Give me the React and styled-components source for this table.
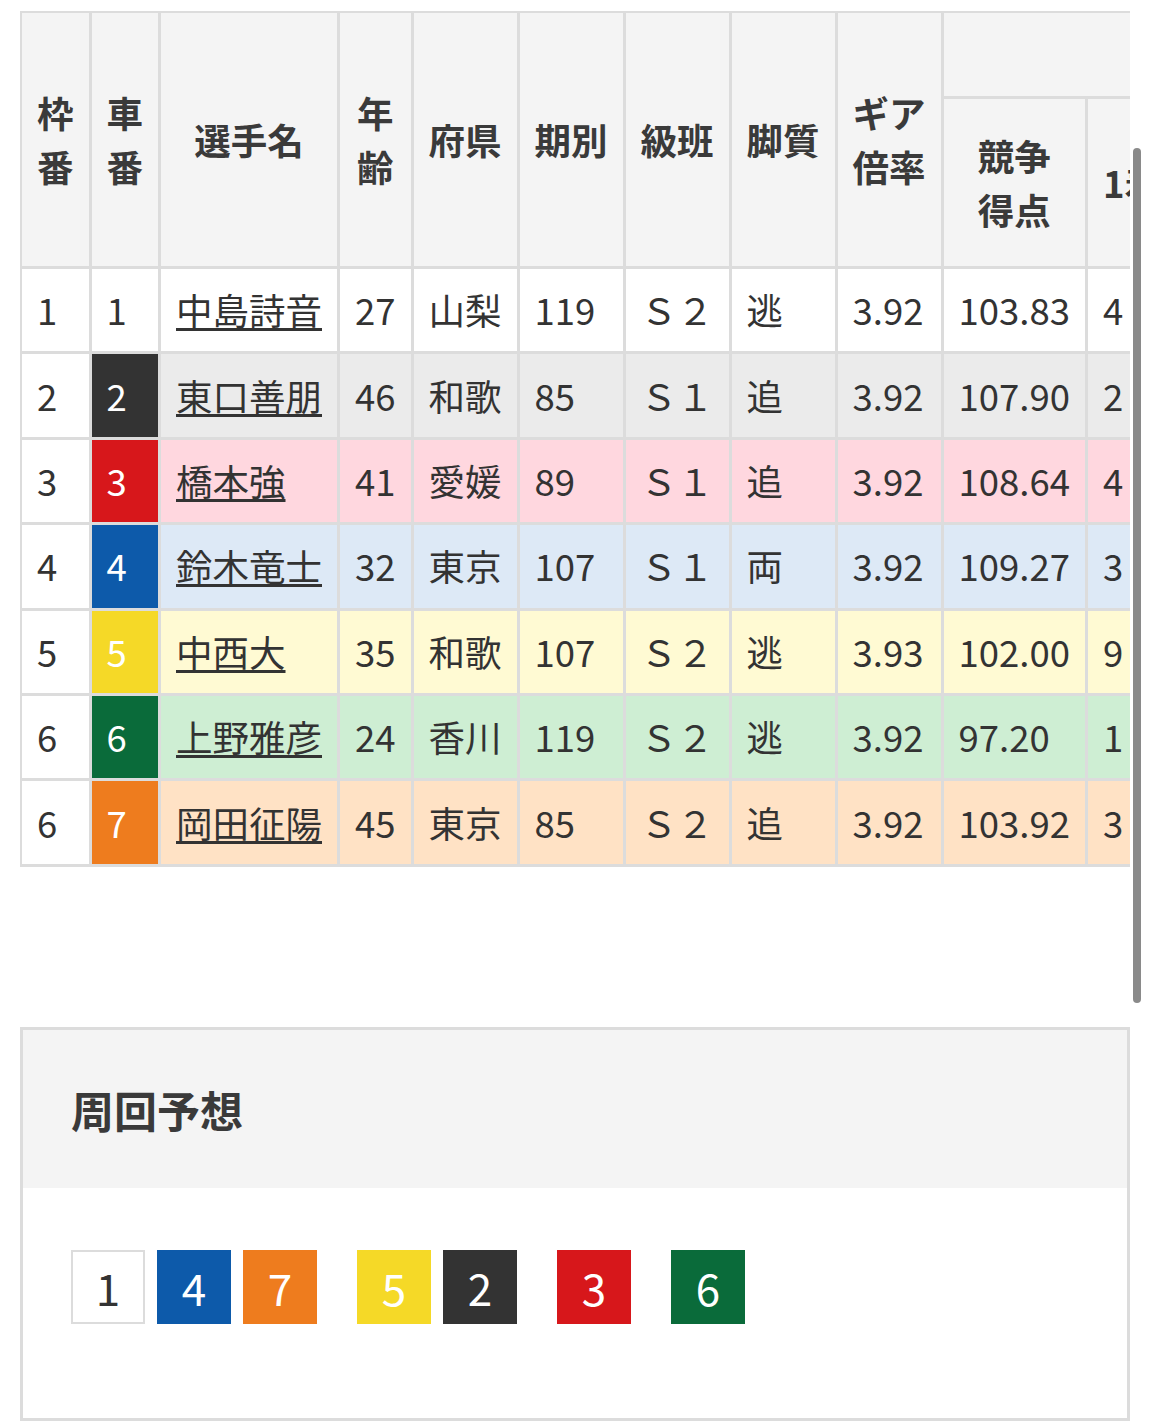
import React from "react";
import styled, { createGlobalStyle } from "styled-components";

const GlobalStyle = createGlobalStyle`
  body {
    margin: 0;
    background: #fff;
    font-family: "Noto Sans CJK JP", "Noto Sans", sans-serif;
    color: #333;
  }
`;

const Page = styled.div`
  position: relative;
  padding: 11px 20px 6px;
`;

const TableWrap = styled.div`
  width: 100%;
  overflow: hidden;
`;

const Table = styled.table`
  border-collapse: separate;
  border-spacing: 0;
  border-top: 2px solid #dcdcdc;
  border-left: 2px solid #dcdcdc;
  font-size: 36.5px;
  line-height: 54px;
  white-space: nowrap;
`;

const HeadRow = styled.tr`
  height: ${(p) => p.$h}px;
`;

const BodyRow = styled.tr`
  height: 85.4px;
`;

const Th = styled.th`
  background: #f4f4f4;
  color: #3a3a3a;
  font-weight: 700;
  text-align: center;
  vertical-align: middle;
  padding: 0 15px;
  border-right: 3px solid #dcdcdc;
  border-bottom: 3px solid #dcdcdc;
`;

const Td = styled.td`
  background: ${(p) => p.$bg || "#fff"};
  color: ${(p) => p.$fg || "#333"};
  font-weight: 400;
  text-align: left;
  vertical-align: middle;
  padding: 0 15px;
  border-right: 3px solid #dcdcdc;
  border-bottom: 3px solid #dcdcdc;
`;

const NameLink = styled.a`
  color: #333;
  text-decoration: underline;
  text-underline-offset: 3px;
`;

const Card = styled.section`
  margin-top: 160px;
  border: 3px solid #dcdcdc;
`;

const CardHead = styled.div`
  height: 158px;
  background: #f4f4f4;
  padding: 0 48px;
  display: flex;
  align-items: center;
`;

const CardTitle = styled.h3`
  margin: 0;
  font-size: 43px;
  font-weight: 700;
  color: #3a3a3a;
`;

const CardBody = styled.div`
  background: #fff;
  padding: 62px 48px 94px;
  display: flex;
  gap: 40px;
`;

const Group = styled.div`
  display: flex;
  gap: 12px;
`;

const Chip = styled.div`
  width: 74px;
  height: 74px;
  box-sizing: border-box;
  display: flex;
  align-items: center;
  justify-content: center;
  font-size: 44px;
  line-height: 1;
  background: ${(p) => p.$bg};
  color: ${(p) => p.$fg};
  border: 2px solid ${(p) => (p.$bg === "#fff" ? "#dcdcdc" : p.$bg)};
`;

const Scrollbar = styled.div`
  position: absolute;
  top: 148px;
  left: 1133px;
  width: 8px;
  height: 855px;
  border-radius: 4px;
  background: #8a8a8a;
`;

const carColors = {
  1: { bg: "#fff", fg: "#333", row: "#fff" },
  2: { bg: "#333333", fg: "#fff", row: "#ebebeb" },
  3: { bg: "#d7171b", fg: "#fff", row: "#ffd7df" },
  4: { bg: "#0d5aaa", fg: "#fff", row: "#dde9f6" },
  5: { bg: "#f5d927", fg: "#fff", row: "#fffad3" },
  6: { bg: "#0a6b3a", fg: "#fff", row: "#ceeed3" },
  7: { bg: "#ee7c1e", fg: "#fff", row: "#ffe2c5" },
};

const riders = [
  { waku: 1, car: 1, name: "中島詩音", age: 27, pref: "山梨", term: 119, cls: "Ｓ２", leg: "逃", gear: "3.92", score: "103.83", r: [4, 3, 2, 11] },
  { waku: 2, car: 2, name: "東口善朋", age: 46, pref: "和歌", term: 85, cls: "Ｓ１", leg: "追", gear: "3.92", score: "107.90", r: [2, 4, 3, 9] },
  { waku: 3, car: 3, name: "橋本強", age: 41, pref: "愛媛", term: 89, cls: "Ｓ１", leg: "追", gear: "3.92", score: "108.64", r: [4, 2, 3, 8] },
  { waku: 4, car: 4, name: "鈴木竜士", age: 32, pref: "東京", term: 107, cls: "Ｓ１", leg: "両", gear: "3.92", score: "109.27", r: [3, 5, 2, 7] },
  { waku: 5, car: 5, name: "中西大", age: 35, pref: "和歌", term: 107, cls: "Ｓ２", leg: "逃", gear: "3.93", score: "102.00", r: [9, 3, 1, 6] },
  { waku: 6, car: 6, name: "上野雅彦", age: 24, pref: "香川", term: 119, cls: "Ｓ２", leg: "逃", gear: "3.92", score: "97.20", r: [1, 2, 4, 12] },
  { waku: 6, car: 7, name: "岡田征陽", age: 45, pref: "東京", term: 85, cls: "Ｓ２", leg: "追", gear: "3.92", score: "103.92", r: [3, 3, 2, 10] },
];

const lineup = [[1, 4, 7], [5, 2], [3], [6]];

const App = () => {
  return (
    <>
      <GlobalStyle />
      <Page>
        <TableWrap>
          <Table>
            <thead>
              <HeadRow $h={86}>
                <Th rowSpan={2}>枠<br />番</Th>
                <Th rowSpan={2}>車<br />番</Th>
                <Th rowSpan={2}>選手名</Th>
                <Th rowSpan={2}>年<br />齢</Th>
                <Th rowSpan={2}>府県</Th>
                <Th rowSpan={2}>期別</Th>
                <Th rowSpan={2}>級班</Th>
                <Th rowSpan={2}>脚質</Th>
                <Th rowSpan={2}>ギア<br />倍率</Th>
                <Th colSpan={5}>成績</Th>
              </HeadRow>
              <HeadRow $h={170}>
                <Th>競争<br />得点</Th>
                <Th>1着</Th>
                <Th>2着</Th>
                <Th>3着</Th>
                <Th>着外</Th>
              </HeadRow>
            </thead>
            <tbody>
              {riders.map((r) => {
                const c = carColors[r.car];
                return (
                  <BodyRow key={r.car}>
                    <Td>{r.waku}</Td>
                    <Td $bg={c.bg} $fg={c.fg}>{r.car}</Td>
                    <Td $bg={c.row}><NameLink href="#">{r.name}</NameLink></Td>
                    <Td $bg={c.row}>{r.age}</Td>
                    <Td $bg={c.row}>{r.pref}</Td>
                    <Td $bg={c.row}>{r.term}</Td>
                    <Td $bg={c.row}>{r.cls}</Td>
                    <Td $bg={c.row}>{r.leg}</Td>
                    <Td $bg={c.row}>{r.gear}</Td>
                    <Td $bg={c.row}>{r.score}</Td>
                    {r.r.map((n, i) => (
                      <Td key={i} $bg={c.row}>{n}</Td>
                    ))}
                  </BodyRow>
                );
              })}
            </tbody>
          </Table>
        </TableWrap>

        <Card>
          <CardHead>
            <CardTitle>周回予想</CardTitle>
          </CardHead>
          <CardBody>
            {lineup.map((g, gi) => (
              <Group key={gi}>
                {g.map((n) => (
                  <Chip key={n} $bg={carColors[n].bg} $fg={carColors[n].fg}>{n}</Chip>
                ))}
              </Group>
            ))}
          </CardBody>
        </Card>
        <Scrollbar />
      </Page>
    </>
  );
};

export default App;
